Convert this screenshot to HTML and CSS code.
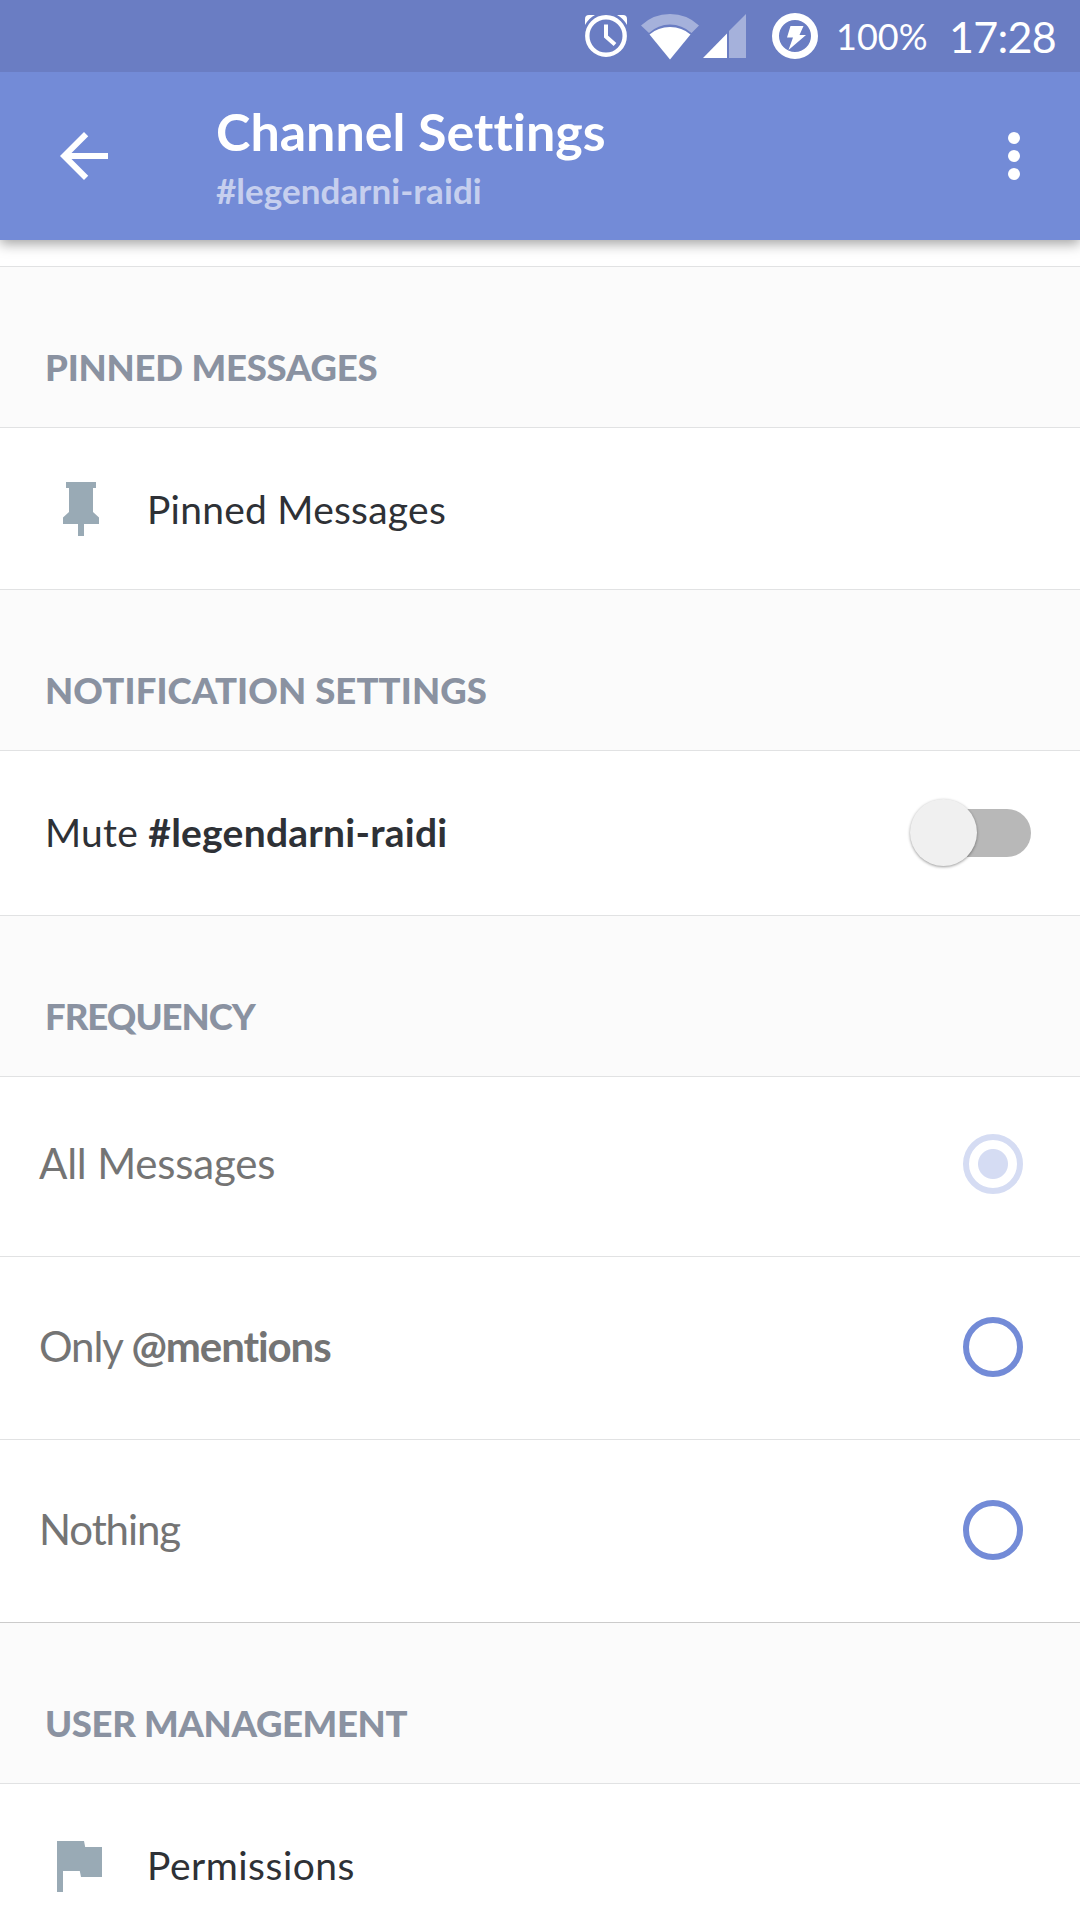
FILE: index.html
```html
<!DOCTYPE html>
<html lang="en">
<head>
<meta charset="utf-8">
<title>Channel Settings</title>
<link rel="stylesheet" href="styles.css">
</head>
<body>
<div class="status-bar">
  <svg class="alarm" width="42" height="42" viewBox="0 0 42 42">
    <circle cx="21" cy="21" r="18.7" fill="none" stroke="#fff" stroke-width="4.4"/>
    <path d="M21 9.5V21.5L30 29.5" fill="none" stroke="#fff" stroke-width="4"/>
    <path d="M0 10V4Q0 0 4 0H10Q4 3 0 10ZM42 10V4Q42 0 38 0H32Q38 3 42 10Z" fill="#fff"/>
  </svg>
  <svg class="wifi" width="58" height="46" viewBox="0 0 58 46">
    <path d="M0 11.5Q12 0 29 0T58 11.5L50.5 19Q41 10.500 29 10.500T8 19Z" fill="#fff" fill-opacity=".4"/>
    <path d="M8.500 20.500Q17 13 29 13T49.500 20.500L29 45.500Z" fill="#fff"/>
  </svg>
  <svg class="signal" width="43" height="44" viewBox="0 0 43 44">
    <path d="M43 0V44H26V17Z" fill="#fff" fill-opacity=".4"/>
    <path d="M24 19.500V44H0Z" fill="#fff"/>
  </svg>
  <svg class="charge" width="46" height="46" viewBox="0 0 46 46">
    <circle cx="23" cy="23" r="19.500" fill="none" stroke="#fff" stroke-width="7"/>
    <path d="M18.500 13H31.500L27.500 22H34L16.500 37L21 24.500H15Z" fill="#fff"/>
  </svg>
  <span class="battery">100%</span>
  <span class="clock">17:28</span>
</div>

<header class="toolbar">
  <svg class="back" width="72" height="72" viewBox="0 0 24 24"><path d="M20 11H7.830l5.590-5.590L12 4l-8 8 8 8 1.410-1.410L7.830 13H20v-2z" fill="#fff"/></svg>
  <div class="titles">
    <h1>Channel Settings</h1>
    <p>#legendarni-raidi</p>
  </div>
  <svg class="more" width="12" height="48" viewBox="0 0 12 48"><g fill="#fff"><circle cx="6" cy="6" r="6"/><circle cx="6" cy="24" r="6"/><circle cx="6" cy="42" r="6"/></g></svg>
</header>

<main>
  <div class="spacer"></div>

  <h2>PINNED MESSAGES</h2>
  <div class="row link">
    <svg class="pin" width="36" height="54" viewBox="0 0 36 54"><path d="M3 0H33V6H30V30L36 35.500V42H21V54H15V42H0V35.500L6 30V6H3Z" fill="#99aab5"/></svg>
    <span>Pinned Messages</span>
  </div>

  <h2 class="notif">NOTIFICATION SETTINGS</h2>
  <div class="row mute">
    <span>Mute <b>#legendarni-raidi</b></span>
    <div class="switch"><div class="thumb"></div></div>
  </div>

  <h2 class="freq">FREQUENCY</h2>
  <div class="row option first"><span>All Messages</span><i class="radio checked"></i></div>
  <div class="row option"><span>Only <b>@mentions</b></span><i class="radio"></i></div>
  <div class="row option last"><span>Nothing</span><i class="radio"></i></div>

  <h2 class="users">USER MANAGEMENT</h2>
  <div class="row link perms">
    <svg class="flag" width="45" height="51" viewBox="0 0 45 51"><path d="M0 0H27L28.200 6H45V36H24L22.800 30H6V51H0Z" fill="#99aab5"/></svg>
    <span>Permissions</span>
  </div>
</main>
</body>
</html>
```
FILE: styles.css
```css
* { box-sizing: border-box; }

body {
  margin: 0;
  width: 1080px;
  height: 1920px;
  overflow: hidden;
  background: #fff;
  color: #2e3136;
  font-family: Lato, "Liberation Sans", sans-serif;
  font-variant-ligatures: none;
}

h1, h2, p { margin: 0; }
svg { flex: none; display: block; }

.status-bar {
  position: relative;
  z-index: 1;
  display: flex;
  align-items: flex-start;
  height: 72px;
  padding: 13px 0 0 585px;
  background: #6a7dc3;
  color: #fff;
}
.alarm { margin-top: 2px; }
.wifi { margin: 1px 0 0 14px; }
.signal { margin: 1px 0 0 4px; }
.charge { margin-left: 26px; }
.battery {
  width: 94px;
  margin: 1px 0 0 18px;
  font-size: 36px;
  line-height: 44px;
}
.clock {
  margin: 2px 0 0 19px;
  font-size: 43px;
  line-height: 44px;
  letter-spacing: -.7px;
}

.toolbar {
  position: relative;
  display: flex;
  align-items: flex-start;
  height: 168px;
  padding: 0 60px 0 48px;
  background: #738bd7;
  color: #fff;
  box-shadow: 0 4px 12px rgba(0, 0, 0, .36);
}
.back { margin-top: 48px; }
.titles {
  flex: 1;
  padding: 29px 0 0 96px;
}
.titles h1 {
  font-size: 52px;
  font-weight: 700;
  line-height: 60px;
}
.titles p {
  margin-top: 7px;
  font-size: 35px;
  font-weight: 700;
  line-height: 44px;
  letter-spacing: .05px;
  color: rgba(255, 255, 255, .6);
}
.more { margin-top: 60px; }

.spacer {
  height: 27px;
  border-bottom: 1px solid #e1e2e3;
}

h2 {
  height: 161px;
  padding: 78px 44px 0 45px;
  border-bottom: 1px solid #e1e2e3;
  background: #fbfbfb;
  color: #8a92a1;
  font-size: 36.5px;
  font-weight: 900;
  line-height: 44px;
  letter-spacing: -.2px;
}
.notif { letter-spacing: .12px; }
.freq { letter-spacing: -1px; }
.users { letter-spacing: -.35px; }

.row {
  display: flex;
  align-items: center;
  border-bottom: 1px solid #e1e2e3;
  font-size: 39px;
  line-height: 48px;
  letter-spacing: .24px;
  white-space: pre;
}
.link { height: 162px; }
.perms { letter-spacing: .5px; }
.pin { margin: 0 48px 0 63px; }
.flag { margin: 4px 45px 0 57px; }

.mute {
  justify-content: space-between;
  height: 165px;
  padding: 0 49px 0 45px;
}
.mute > span { margin-bottom: 2px; }
.switch {
  width: 122px;
  height: 48px;
  border-radius: 24px;
  background: linear-gradient(90deg, transparent 34px, #b8b8b8 34px);
}
.thumb {
  width: 67px;
  height: 67px;
  margin: -10px 0 0 1px;
  border-radius: 50%;
  background: #f0f0f0;
  box-shadow: 0 1px 3px rgba(0, 0, 0, .4);
}

.option {
  justify-content: space-between;
  height: 183px;
  padding: 0 57px 2px 39px;
  color: #747474;
  font-size: 42px;
  letter-spacing: -1.1px;
}
.option > span { margin-bottom: 2px; }
.first {
  height: 180px;
  padding-bottom: 5px;
  letter-spacing: -.2px;
}
.last { border-bottom-color: #cbcbcb; }

.radio {
  width: 60px;
  height: 60px;
  border: 6px solid #738bd7;
  border-radius: 50%;
}
.checked {
  border-color: #d5dcf3;
  background: radial-gradient(circle, #d5dcf3 14.500px, transparent 15.500px);
}
```
